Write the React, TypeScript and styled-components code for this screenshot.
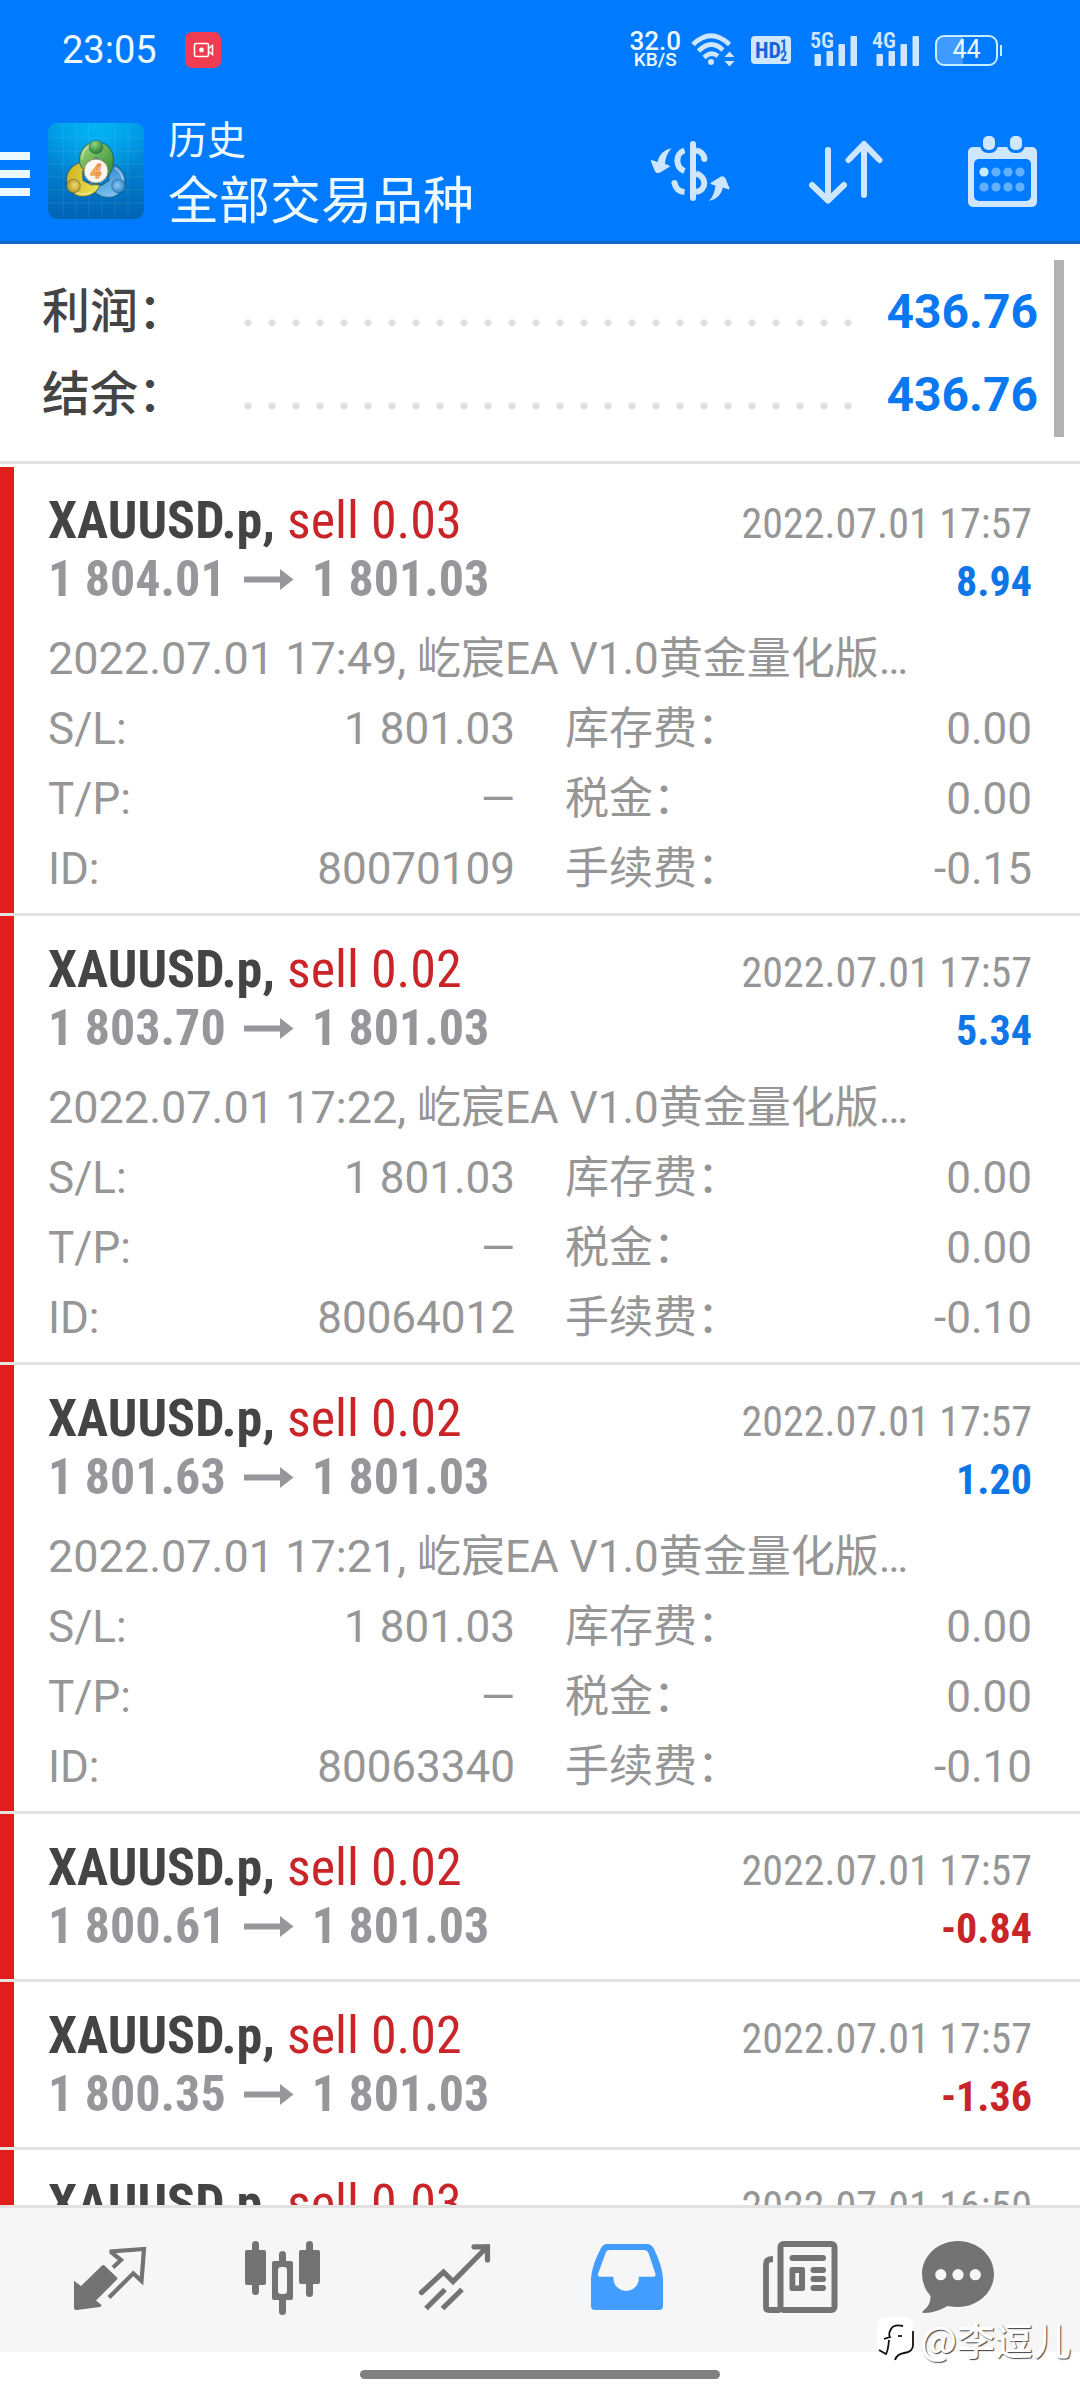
import React from 'react';
import styled, { createGlobalStyle } from 'styled-components';

const sans = 'Roboto, "Noto Sans CJK SC", sans-serif';
const condensed = '"Roboto Condensed", Roboto, "Noto Sans CJK SC", sans-serif';

const color = {
  brand: '#007aff',
  onBrand: '#ecfaff',
  icon: '#cfe6ff',
  ink: '#444444',
  muted: '#969696',
  price: '#97979b',
  sell: '#c92529',
  stripe: '#e21d1d',
  gain: '#0f76e8',
  rule: '#e2e2e2',
  tab: '#737373',
};

const GlobalStyle = createGlobalStyle`
  *, *::before, *::after { box-sizing: border-box; }
  body { margin: 0; background: #fff; font-family: ${sans}; }
  button { margin: 0; padding: 0; border: 0; background: none; font: inherit; cursor: pointer; }
  h1, h2, p, dl, dt, dd, ul { margin: 0; padding: 0; font-weight: inherit; }
  ul { list-style: none; }
  svg { display: block; overflow: visible; }
`;

const Screen = styled.div`
  position: relative;
  display: flex;
  flex-direction: column;
  height: 100vh;
  overflow: hidden;
`;

/* ---------- status bar ---------- */

const StatusBar = styled.div`
  flex: none;
  display: flex;
  align-items: center;
  height: 100px;
  padding: 0 78px 0 62px;
  background: ${color.brand};
  color: ${color.onBrand};
`;

const Clock = styled.time`
  font-size: 38px;
  line-height: 48px;
  margin-right: 28px;
`;

const StatusIcons = styled.div`
  display: flex;
  align-items: center;
  gap: 16px;
  margin-left: auto;
`;

const NetRate = styled.div`
  display: flex;
  flex-direction: column;
  align-items: center;
  margin-right: -6px;
  font-weight: 500;
`;

const RateValue = styled.span`
  font-size: 26px;
  line-height: 20px;
`;

const RateUnit = styled.span`
  font-size: 19px;
  line-height: 18px;
`;

const Battery = styled.div`
  position: relative;
  display: flex;
  align-items: center;
  justify-content: center;
  width: 63px;
  height: 31px;
  margin-right: 4px;
  border: 2px solid #c5efff;
  border-radius: 9px;
  background: linear-gradient(90deg, #3f9bff 44%, transparent 44%);
  font-size: 25px;
  line-height: 28px;

  &::after {
    content: '';
    position: absolute;
    right: -6px;
    width: 2px;
    height: 11px;
    background: #c5efff;
  }
`;

/* ---------- title bar ---------- */

const TitleBar = styled.header`
  flex: none;
  display: flex;
  align-items: center;
  height: 144px;
  border-bottom: 3px solid #1468c8;
  background: ${color.brand};
  color: ${color.onBrand};
`;

const MenuButton = styled.button`
  display: flex;
  flex-direction: column;
  gap: 10px;
  width: 48px;
  padding-top: 6px;
`;

const MenuLine = styled.span`
  width: 30px;
  height: 8px;
  background: ${color.onBrand};
`;

const Titles = styled.div`
  flex: 1;
  min-width: 0;
  padding: 12px 0 0 24px;
`;

const Section = styled.p`
  font-size: 39px;
  line-height: 50px;
`;

const Filter = styled.h1`
  font-size: 51px;
  line-height: 72px;
  white-space: nowrap;
`;

const ActionButton = styled.button`
  display: flex;
  justify-content: center;
  width: 156px;
`;

/* ---------- summary ---------- */

const Summary = styled.section`
  position: relative;
  flex: none;
  padding: 26px 42px 25px;
  border-bottom: 3px solid ${color.rule};
  margin-bottom: 3px;
`;

const SummaryRow = styled.dl`
  display: flex;
  font-size: 48px;
  line-height: 83px;
`;

const SummaryLabel = styled.dt`
  width: 194px;
  color: ${color.ink};
  font-weight: 500;
`;

const Leader = styled.span`
  flex: 1;
  height: 8px;
  margin: 49px 24px 0 0;
  background: radial-gradient(circle at 12px 4px, #e0e0e0 3px, transparent 4px) 0 0 / 24px 8px repeat-x;
`;

const SummaryValue = styled.dd`
  color: #0a78f0;
  font-weight: 700;
`;

const ScrollThumb = styled.div`
  position: absolute;
  top: 16px;
  right: 16px;
  bottom: 24px;
  width: 10px;
  background: #b2b2b2;
`;

/* ---------- deals ---------- */

const DealList = styled.ul`
  flex: 1;
  min-height: 0;
  display: flex;
  flex-direction: column;
  gap: 3px;
  overflow: hidden;
  background: ${color.rule};
`;

const Deal = styled.li<{ $open?: boolean }>`
  flex: none;
  padding: 24px 48px ${p => (p.$open ? 9 : 23)}px 34px;
  border-left: 14px solid ${color.stripe};
  background: #fff;
`;

const DealLine = styled.div`
  display: flex;
  justify-content: space-between;
  align-items: baseline;
  font-family: ${condensed};
  line-height: 59px;
  white-space: nowrap;
`;

const Symbol = styled.h2`
  font-size: 52px;
  font-weight: 700;
  color: ${color.ink};
`;

const Side = styled.span`
  font-weight: 400;
  color: ${color.sell};
`;

const ClosedAt = styled.time`
  font-size: 42px;
  line-height: 42px;
  color: ${color.muted};
`;

const Prices = styled.p`
  display: flex;
  align-items: baseline;
  gap: 18px;
  font-size: 50px;
  font-weight: 700;
  color: ${color.price};
`;

const Profit = styled.span<{ $loss: boolean }>`
  font-size: 42px;
  line-height: 42px;
  font-weight: 700;
  color: ${p => (p.$loss ? color.sell : color.gain)};
`;

const Details = styled.div`
  margin-top: 15px;
  font-size: 44px;
  line-height: 70px;
  color: ${color.muted};
`;

const Comment = styled.p`
  white-space: nowrap;
`;

const OpenedAt = styled.time`
  font-size: 45px;
`;

const DetailGrid = styled.dl`
  display: grid;
  grid-template-columns: 1fr 1fr;
  column-gap: 50px;
`;

const Detail = styled.div`
  display: flex;
  justify-content: space-between;
`;

/* ---------- bottom navigation ---------- */

const TabBar = styled.nav`
  flex: none;
  display: flex;
  height: 147px;
  padding: 0 50px 0 24px;
  border-top: 3px solid ${color.rule};
  background: #f6f6f6;
`;

const Tab = styled.button<{ $active?: boolean }>`
  flex: 1;
  display: flex;
  align-items: center;
  justify-content: center;
  color: ${p => (p.$active ? '#439cff' : color.tab)};

  &:last-child {
    flex: 0 0 144px;
  }
`;

const GestureArea = styled.div`
  flex: none;
  display: flex;
  justify-content: center;
  height: 48px;
  padding-top: 18px;
`;

const GestureBar = styled.div`
  width: 33.3%;
  height: 9px;
  border-radius: 5px;
  background: #808080;
`;

const Watermark = styled.div`
  position: absolute;
  right: 9px;
  bottom: 37px;
  display: flex;
  align-items: center;
  gap: 4px;
  font-family: "Noto Sans CJK SC", sans-serif;
  font-size: 38px;
  font-weight: 500;
  line-height: 48px;
  color: #fff;
  text-shadow: 1px 1px 1px rgba(0, 0, 0, 0.75);
`;

/* ---------- drawings ---------- */

const RecordBadge = () => (
  <svg width="36" height="36" viewBox="0 0 36 36" role="img" aria-label="Recording">
    <rect width="36" height="36" rx="7" fill="#f03c50" />
    <rect x="9.5" y="11.5" width="14" height="13" rx="1.5" fill="none" stroke="#fff" strokeWidth="1.6" />
    <circle cx="16.500" cy="18" r="2.4" fill="#fff" />
    <path d="M23.500 16.500l4-3v9l-4-3" fill="none" stroke="#fff" strokeWidth="1.5" />
  </svg>
);

const Wifi = () => (
  <svg width="44" height="36" viewBox="0 0 44 36" fill="none" stroke={color.icon} strokeWidth="4.6">
    <path d="M2 12.500Q20 -5 38.500 12.500" />
    <path d="M7.500 19Q20 6.500 32 18" />
    <path d="M13 25.500Q20 18.500 27 24" />
    <circle cx="20" cy="30" r="3" fill={color.icon} stroke="none" />
    <path d="M38.500 19.500l5 5.500h-10zM38.500 34.500l5-5.500h-10z" fill={color.icon} stroke="none" />
  </svg>
);

const HdBadge = () => (
  <svg width="44" height="28" viewBox="0 0 44 28">
    <rect width="40" height="28" rx="4" fill={color.icon} />
    <g fill="#1565d8" fontFamily={condensed} fontWeight="700">
      <text x="4" y="22" fontSize="22">HD</text>
      <text x="29" y="14" fontSize="14">1</text>
      <text x="29" y="25" fontSize="14">2</text>
    </g>
  </svg>
);

const Signal = ({ label }: { label: string }) => (
  <svg width="46" height="34" viewBox="0 0 46 34" fill={color.icon}>
    <text x="-1" y="15" fontSize="22" fontWeight="600" fontFamily={condensed}>{label}</text>
    <rect x="3.500" y="21" width="6.500" height="12" rx="1" />
    <rect x="15.500" y="18" width="6.500" height="15" rx="1" />
    <rect x="27.500" y="11" width="6.500" height="22" rx="1" />
    <rect x="39.500" y="3" width="6.500" height="30" rx="1" />
  </svg>
);

const Person = ({ body, head, angle }: { body: string; head: string; angle: number }) => (
  <g transform={`rotate(${angle} 48 50)`}>
    <path d="M48 19C37 19 31.500 28 31.500 37c0 5 2.500 9 5 10l3.500-7 8-5 8 4 4 14c4-4 5.500-10 5.500-16C65.500 27 59 19 48 19z" fill={`url(#${body})`} stroke="#1b4a5c" strokeOpacity=".55" strokeWidth="1.2" />
    <path d="M34 36c1-9 6-14 14-14" fill="none" stroke="#fff" strokeOpacity=".45" strokeWidth="1.5" />
    <circle cx="48" cy="24" r="6.800" fill={`url(#${head})`} stroke="#1b4a5c" strokeOpacity=".4" />
  </g>
);

const AppLogo = () => (
  <svg width="96" height="96" viewBox="0 0 96 96" role="img" aria-label="MetaTrader 4">
    <defs>
      <linearGradient id="bg" x1="0" y1="0" x2="0" y2="1">
        <stop offset="0" stopColor="#0099e6" />
        <stop offset="1" stopColor="#0063b4" />
      </linearGradient>
      <radialGradient id="glow" cx=".5" cy=".05" r=".6">
        <stop offset="0" stopColor="#00b4f4" />
        <stop offset="1" stopColor="#00b4f4" stopOpacity="0" />
      </radialGradient>
      <linearGradient id="green" x1="0" y1="0" x2="1" y2="1">
        <stop offset="0" stopColor="#a4d977" />
        <stop offset="1" stopColor="#2a8a34" />
      </linearGradient>
      <linearGradient id="blue" x1="0" y1="1" x2="1" y2="0">
        <stop offset="0" stopColor="#1878c4" />
        <stop offset="1" stopColor="#8ed0f8" />
      </linearGradient>
      <linearGradient id="gold" x1="0" y1="1" x2="1" y2="0">
        <stop offset="0" stopColor="#f4ee5c" />
        <stop offset="1" stopColor="#c8ac1c" />
      </linearGradient>
      <radialGradient id="greenHead" cx=".4" cy=".3" r=".7">
        <stop offset="0" stopColor="#96d87c" />
        <stop offset="1" stopColor="#23803a" />
      </radialGradient>
      <radialGradient id="blueHead" cx=".5" cy=".6" r=".7">
        <stop offset="0" stopColor="#8ccdf6" />
        <stop offset="1" stopColor="#1a6fb8" />
      </radialGradient>
      <radialGradient id="goldHead" cx=".5" cy=".6" r=".7">
        <stop offset="0" stopColor="#f2dc62" />
        <stop offset="1" stopColor="#a8841c" />
      </radialGradient>
    </defs>
    <rect width="96" height="96" rx="9" fill="url(#bg)" />
    <rect width="96" height="96" rx="9" fill="url(#glow)" />
    <path d="M15 0v96M28 0v96M41 0v96M54 0v96M67 0v96M80 0v96M0 15h96M0 28h96M0 41h96M0 54h96M0 67h96M0 80h96" stroke="#fff" strokeOpacity=".09" />
    <Person body="blue" head="blueHead" angle={120} />
    <Person body="gold" head="goldHead" angle={240} />
    <Person body="green" head="greenHead" angle={0} />
    <circle cx="48" cy="48" r="12" fill="#fbf7f0" stroke="#9a9480" strokeWidth="1" />
    <text x="48" y="55" textAnchor="middle" fontSize="20" fontStyle="italic" fontWeight="700" fontFamily={sans} fill="#f5c08a" stroke="#ee8a32" strokeWidth=".8">4</text>
  </svg>
);

const arrowPath =
  'M21.500 17.300Q9.500 20 7.500 31L1.500 29Q.5 29.300 1 30.500L5 40.500Q7.500 43.500 11 41L20 35.500Q19.500 34 15 33Q15.500 24 21.500 17.300Z';

const CurrencyIcon = () => (
  <svg width="80" height="80" viewBox="0 0 80 80" fill="none" stroke={color.icon} strokeWidth="6">
    <path d="M43 13v54" strokeLinecap="round" />
    <path d="M46 19.500c5 .5 8 4 8.500 8.500" />
    <circle cx="54.300" cy="28" r="3" fill={color.icon} stroke="none" />
    <path d="M46 42.500c11 3 11 17 0 18.500" />
    <path d="M34.500 19.500C25 22.500 25 36 34.500 40" />
    <path d="M24.500 52c1 5 4.500 8.500 10 9" />
    <circle cx="24.500" cy="52" r="3" fill={color.icon} stroke="none" />
    <g fill={color.icon} stroke="none">
      <path d={arrowPath} />
      <path transform="rotate(180 40.200 43.700)" d={arrowPath} />
    </g>
  </svg>
);

const SortIcon = () => (
  <svg width="80" height="80" viewBox="0 0 80 80" fill="none" stroke={color.icon} strokeWidth="6" strokeLinecap="round" strokeLinejoin="round">
    <path d="M22 19v50M6 54l16 15.500L38 54" />
    <path d="M58 64V13M42.500 29L58 13l15.500 16" />
  </svg>
);

const CalendarIcon = () => (
  <svg width="80" height="80" viewBox="0 0 80 80" fill={color.icon}>
    <rect x="6" y="16" width="69" height="60" rx="5" />
    <rect x="12" y="28" width="57" height="42" rx="5" fill={color.brand} />
    <g stroke={color.brand} strokeWidth="3">
      <rect x="19.500" y="3.500" width="15" height="17" rx="6.500" />
      <rect x="46.500" y="3.500" width="15" height="17" rx="6.500" />
    </g>
    {[41, 56].map(cy =>
      [22, 34, 46, 58].map(cx => (
        <circle key={`${cx}-${cy}`} cx={cx} cy={cy} r="4.600" fill={cx === 22 && cy === 41 ? '#c4ecff' : '#62b0ff'} />
      )),
    )}
  </svg>
);

const PriceArrow = () => (
  <svg width="50" height="22" viewBox="0 0 50 22" fill={color.price} aria-label="to">
    <path d="M0 7.500h36V0l13.500 10.500L36 21v-7.500H0z" />
  </svg>
);

const ArrowBox = styled.span`
  display: block;
  align-self: center;
`;

const QuotesIcon = () => (
  <svg width="76" height="76" viewBox="0 0 76 76">
    <path d="M2 38.700L9 44L30 23.500Q31.500 22.500 33 24L45 35.500Q45.800 36.500 45 37.500L24 58.500L29.500 63Q29.500 64.500 28 65L5 68Q2 68 2 66Z" fill="currentColor" />
    <path d="M41 25.500L49 18L39.500 10.500V9.500L72 7L69.500 39L61.300 31.300L37 55.500" fill="none" stroke="currentColor" strokeWidth="4.200" />
  </svg>
);

const ChartIcon = () => (
  <svg width="76" height="76" viewBox="0 0 76 76" fill="currentColor">
    <rect x="7" y="-1" width="7" height="54" rx="3.500" />
    <rect x="0" y="8" width="21" height="35" rx="2" />
    <rect x="34" y="9" width="7" height="64" rx="3.500" />
    <rect x="27" y="19" width="21" height="39" rx="2" />
    <rect x="33" y="25" width="9" height="27" rx="3" fill="#f6f6f6" />
    <rect x="61" y="-1" width="7" height="56" rx="3.500" />
    <rect x="54" y="8" width="21" height="34" rx="2" />
  </svg>
);

const TradeIcon = () => (
  <svg width="76" height="76" viewBox="0 0 76 76" fill="none" stroke="currentColor" strokeWidth="5.200">
    <path d="M4.500 50.500L26.500 30L36 39.500L70 5" strokeLinecap="round" />
    <path d="M57 4.800H70.500V18" strokeLinecap="round" />
    <path d="M64 5h7v8z" fill="currentColor" stroke="none" />
    <path d="M9 66.500L28 47.500M25.500 66.500L45 47.500" />
  </svg>
);

const HistoryIcon = () => (
  <svg width="76" height="76" viewBox="0 0 76 76" fill="currentColor" fillRule="evenodd">
    <path d="M18 2H58Q62.500 2 65 7Q73 23 74 36V64Q74 68 70 68H6Q2 68 2 64V36Q3 23 11.500 7Q14 2 18 2ZM20 8Q18 8 17 10L9 32Q8.500 34.800 11 34.800H24.500V37.500A12.700 12.500 0 0 0 49.800 37.500V34.800H64Q67.500 34.800 66.500 32L59.500 11Q58 8 55 8Z" />
  </svg>
);

const NewsIcon = () => (
  <svg width="76" height="76" viewBox="0 0 76 76" fill="currentColor">
    <rect x="18.500" y="2" width="54" height="66" rx="3" fill="none" stroke="currentColor" strokeWidth="6" />
    <path d="M11 17Q4 17 4 22V65Q4 68 7 68H18" fill="none" stroke="currentColor" strokeWidth="5.800" />
    <rect x="27.500" y="13" width="36.500" height="6" rx="3" />
    <path fillRule="evenodd" d="M30 25h10.500q2.500 0 2.500 2.500v19q0 2.500-2.500 2.500H30q-2.500 0-2.500-2.500v-19Q27.500 25 30 25zM33.300 31v12.500h3.700V31z" />
    <rect x="48.500" y="25" width="15.500" height="6" rx="3" />
    <rect x="48.500" y="34" width="15.500" height="6" rx="3" />
    <rect x="48.500" y="43" width="15.500" height="6" rx="3" />
  </svg>
);

const ChatIcon = () => (
  <svg width="76" height="76" viewBox="0 0 76 76" fill="currentColor">
    <path d="M38 -1C58 -1 74 14 74 32S58 65 38 65Q32.500 65 27.500 64Q17 70.500 4 71Q1.500 71 3 69Q11 63 10.500 54Q2 44.500 2 32C2 14 18 -1 38 -1Z" />
    <g fill="#f6f6f6">
      <circle cx="20.800" cy="32.700" r="5.600" />
      <circle cx="38" cy="32.700" r="5.600" />
      <circle cx="55.300" cy="32.700" r="5.600" />
    </g>
  </svg>
);

const NoteMark = () => (
  <svg width="40" height="44" viewBox="0 0 40 44" fill="none">
    <path d="M12 0h16q10 0 10 11v14q0 9-8 11-8 2-10 7l-8-5Q1 36 1 26V11Q1 0 12 0z" fill="#fff" />
    <g stroke="#111" strokeWidth="1.800">
      <path d="M27 9q-9-2-12 3t-1 8l-6 2" />
      <path d="M22 19h4" />
      <path d="M13 23Q12 34 10 37l-7-4" />
      <path d="M37 14v14q0 7-9 8-7 1-9 7" />
    </g>
  </svg>
);

/* ---------- data ---------- */

interface DealData {
  volume: string;
  open: string;
  closedAt: string;
  profit: string;
  openedAt?: string;
  id?: string;
  fee?: string;
}

const close = '1 801.03';
const comment = '屹宸EA V1.0黄金量化版…';

const deals: DealData[] = [
  { volume: '0.03', open: '1 804.01', closedAt: '2022.07.01 17:57', profit: '8.94', openedAt: '2022.07.01 17:49', id: '80070109', fee: '-0.15' },
  { volume: '0.02', open: '1 803.70', closedAt: '2022.07.01 17:57', profit: '5.34', openedAt: '2022.07.01 17:22', id: '80064012', fee: '-0.10' },
  { volume: '0.02', open: '1 801.63', closedAt: '2022.07.01 17:57', profit: '1.20', openedAt: '2022.07.01 17:21', id: '80063340', fee: '-0.10' },
  { volume: '0.02', open: '1 800.61', closedAt: '2022.07.01 17:57', profit: '-0.84' },
  { volume: '0.02', open: '1 800.35', closedAt: '2022.07.01 17:57', profit: '-1.36' },
  { volume: '0.03', open: '1 799.84', closedAt: '2022.07.01 16:50', profit: '-3.57' },
];

const totals = [
  ['利润：', '436.76'],
  ['结余：', '436.76'],
];

const tabs = [
  { name: '行情', Icon: QuotesIcon },
  { name: '图表', Icon: ChartIcon },
  { name: '交易', Icon: TradeIcon },
  { name: '历史', Icon: HistoryIcon, active: true },
  { name: '新闻', Icon: NewsIcon },
  { name: '信息', Icon: ChatIcon },
];

const DealItem = ({ deal }: { deal: DealData }) => {
  const details = [
    ['S/L:', close],
    ['库存费：', '0.00'],
    ['T/P:', '—'],
    ['税金：', '0.00'],
    ['ID:', deal.id],
    ['手续费：', deal.fee],
  ];
  return (
    <Deal $open={!!deal.openedAt}>
      <DealLine>
        <Symbol>
          XAUUSD.p, <Side>sell {deal.volume}</Side>
        </Symbol>
        <ClosedAt>{deal.closedAt}</ClosedAt>
      </DealLine>
      <DealLine>
        <Prices>
          <span>{deal.open}</span>
          <ArrowBox><PriceArrow /></ArrowBox>
          <span>{close}</span>
        </Prices>
        <Profit $loss={deal.profit.startsWith('-')}>{deal.profit}</Profit>
      </DealLine>
      {deal.openedAt && (
        <Details>
          <Comment>
            <OpenedAt>{deal.openedAt},</OpenedAt> {comment}
          </Comment>
          <DetailGrid>
            {details.map(([label, value]) => (
              <Detail key={label}>
                <dt>{label}</dt>
                <dd>{value}</dd>
              </Detail>
            ))}
          </DetailGrid>
        </Details>
      )}
    </Deal>
  );
};

export default function App() {
  return (
    <Screen lang="zh-CN">
      <GlobalStyle />
      <StatusBar>
        <Clock>23:05</Clock>
        <RecordBadge />
        <StatusIcons>
          <NetRate>
            <RateValue>32.0</RateValue>
            <RateUnit>KB/S</RateUnit>
          </NetRate>
          <Wifi />
          <HdBadge />
          <Signal label="5G" />
          <Signal label="4G" />
          <Battery>44</Battery>
        </StatusIcons>
      </StatusBar>

      <TitleBar>
        <MenuButton aria-label="菜单">
          <MenuLine />
          <MenuLine />
          <MenuLine />
        </MenuButton>
        <AppLogo />
        <Titles>
          <Section>历史</Section>
          <Filter>全部交易品种</Filter>
        </Titles>
        <ActionButton aria-label="交易品种"><CurrencyIcon /></ActionButton>
        <ActionButton aria-label="排序"><SortIcon /></ActionButton>
        <ActionButton aria-label="日期"><CalendarIcon /></ActionButton>
      </TitleBar>

      <Summary>
        {totals.map(([label, value]) => (
          <SummaryRow key={label}>
            <SummaryLabel>{label}</SummaryLabel>
            <Leader />
            <SummaryValue>{value}</SummaryValue>
          </SummaryRow>
        ))}
        <ScrollThumb />
      </Summary>

      <DealList>
        {deals.map(deal => (
          <DealItem key={deal.open} deal={deal} />
        ))}
      </DealList>

      <TabBar>
        {tabs.map(({ name, Icon, active }) => (
          <Tab key={name} $active={active} aria-label={name}>
            <Icon />
          </Tab>
        ))}
      </TabBar>
      <GestureArea>
        <GestureBar />
      </GestureArea>
      <Watermark>
        <NoteMark />
        <span>@李逗儿</span>
      </Watermark>
    </Screen>
  );
}
